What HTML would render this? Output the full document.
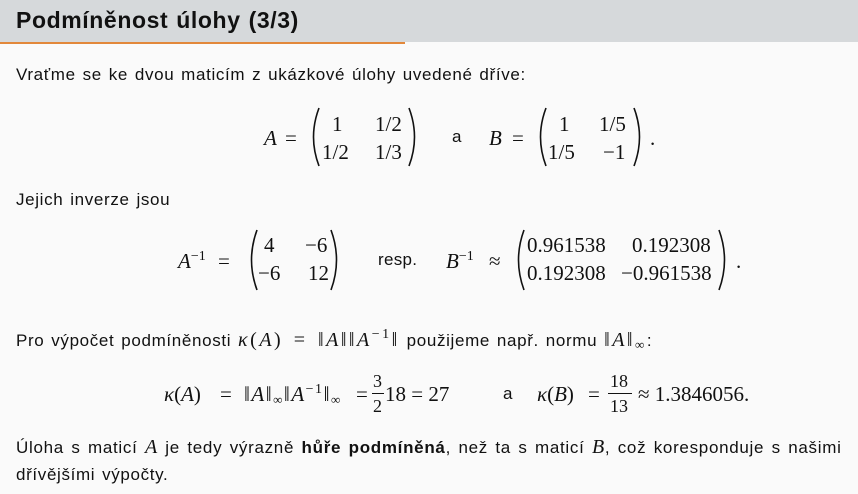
<!DOCTYPE html>
<html><head><meta charset="utf-8"><style>
body{margin:0;width:858px;height:494px;background:#fafafa;position:relative;overflow:hidden;font-family:"Liberation Sans",sans-serif;color:#111;}
.hd{position:absolute;left:0;top:0;width:858px;height:42px;background:#d6d9db;}
.ln{position:absolute;left:0;top:42px;width:405px;height:2px;background:#e2883a;}
.t{position:absolute;white-space:nowrap;font-size:17px;line-height:20px;letter-spacing:0.65px;word-spacing:1.5px;}
.m{position:absolute;white-space:nowrap;font-family:"Liberation Serif",serif;font-size:21px;line-height:20px;}
i{font-family:"Liberation Serif",serif;font-size:20px;}
.m i{font-size:21px;}
sup{font-size:14px;font-style:normal;line-height:0;position:relative;top:-8px;vertical-align:baseline;font-family:"Liberation Serif",serif;}
sub{font-size:13px;line-height:0;position:relative;top:3px;vertical-align:baseline;}
.p{position:absolute;}
.s{font-family:"Liberation Serif",serif;font-size:20px;letter-spacing:2.5px;word-spacing:3px;}
</style></head><body>
<div class="hd"></div><div class="ln"></div>
<div class="t" style="left:16px;top:6px;font-size:23px;line-height:28px;font-weight:bold;letter-spacing:0.6px;word-spacing:1px">Podmíněnost úlohy (3/3)</div>

<div class="t" style="left:16px;top:65px">Vraťme se ke dvou maticím z ukázkové úlohy uvedené dříve:</div>

<div class="m" style="left:264px;top:128px"><i>A</i></div>
<div class="m" style="left:285px;top:128px">=</div>
<svg class="p" style="left:306px;top:107px" width="16" height="60"><path d="M13 1 Q2 30 13 59" stroke="#111" stroke-width="1.6" fill="none"/></svg>
<div class="m" style="left:332px;top:114px">1</div>
<div class="m" style="left:375px;top:114px">1/2</div>
<div class="m" style="left:322px;top:142px">1/2</div>
<div class="m" style="left:375px;top:142px">1/3</div>
<svg class="p" style="left:406px;top:107px" width="16" height="60"><path d="M3 1 Q14 30 3 59" stroke="#111" stroke-width="1.6" fill="none"/></svg>
<div class="t" style="left:452px;top:127px">a</div>
<div class="m" style="left:489px;top:128px"><i>B</i></div>
<div class="m" style="left:512px;top:128px">=</div>
<svg class="p" style="left:533px;top:107px" width="16" height="60"><path d="M13 1 Q2 30 13 59" stroke="#111" stroke-width="1.6" fill="none"/></svg>
<div class="m" style="left:559px;top:114px">1</div>
<div class="m" style="left:599px;top:114px">1/5</div>
<div class="m" style="left:548px;top:142px">1/5</div>
<div class="m" style="left:603px;top:142px">−1</div>
<svg class="p" style="left:631px;top:107px" width="16" height="60"><path d="M3 1 Q14 30 3 59" stroke="#111" stroke-width="1.6" fill="none"/></svg>
<div class="m" style="left:650px;top:128px">.</div>

<div class="t" style="left:16px;top:190px">Jejich inverze jsou</div>

<div class="m" style="left:178px;top:251px"><i>A</i><sup>−1</sup></div>
<div class="m" style="left:218px;top:251px">=</div>
<svg class="p" style="left:244px;top:229px" width="16" height="62"><path d="M13 1 Q2 31 13 61" stroke="#111" stroke-width="1.6" fill="none"/></svg>
<div class="m" style="left:264px;top:235px">4</div>
<div class="m" style="left:305px;top:235px">−6</div>
<div class="m" style="left:258px;top:263px">−6</div>
<div class="m" style="left:308px;top:263px">12</div>
<svg class="p" style="left:328px;top:229px" width="16" height="62"><path d="M3 1 Q14 31 3 61" stroke="#111" stroke-width="1.6" fill="none"/></svg>
<div class="t" style="left:378px;top:250px;letter-spacing:0.3px">resp.</div>
<div class="m" style="left:446px;top:251px"><i>B</i><sup>−1</sup></div>
<div class="m" style="left:489px;top:251px">≈</div>
<svg class="p" style="left:511px;top:229px" width="16" height="62"><path d="M13 1 Q2 31 13 61" stroke="#111" stroke-width="1.6" fill="none"/></svg>
<div class="m" style="left:527px;top:235px">0.961538</div>
<div class="m" style="left:632px;top:235px">0.192308</div>
<div class="m" style="left:527px;top:263px">0.192308</div>
<div class="m" style="left:621px;top:263px">−0.961538</div>
<svg class="p" style="left:716px;top:229px" width="16" height="62"><path d="M3 1 Q14 31 3 61" stroke="#111" stroke-width="1.6" fill="none"/></svg>
<div class="m" style="left:736px;top:251px">.</div>

<div class="t" style="left:16px;top:330px">Pro výpočet podmíněnosti <span class="s"><i>κ</i>(<i>A</i>) = ‖<i>A</i>‖‖<i>A</i><sup>−1</sup>‖</span> použijeme např. normu <span class="s">‖<i>A</i>‖<sub>∞</sub></span>:</div>

<div class="m" style="left:164px;top:384px"><i>κ</i>(<i>A</i>)</div>
<div class="m" style="left:220px;top:384px">=</div>
<div class="m" style="left:244px;top:384px;letter-spacing:1.5px">‖<i>A</i>‖<sub>∞</sub>‖<i>A</i><sup>−1</sup>‖<sub>∞</sub></div>
<div class="m" style="left:356px;top:384px">=</div>
<div class="m" style="left:373px;top:371px;font-size:18px">3</div>
<div class="p" style="left:372px;top:393px;width:12px;height:1px;background:#111"></div>
<div class="m" style="left:373px;top:396px;font-size:18px">2</div>
<div class="m" style="left:385px;top:384px">18 = 27</div>
<div class="t" style="left:503px;top:384px">a</div>
<div class="m" style="left:537px;top:384px"><i>κ</i>(<i>B</i>)</div>
<div class="m" style="left:588px;top:384px">=</div>
<div class="m" style="left:610px;top:371px;font-size:18px">18</div>
<div class="p" style="left:608px;top:393px;width:24px;height:1px;background:#111"></div>
<div class="m" style="left:610px;top:396px;font-size:18px">13</div>
<div class="m" style="left:638px;top:384px">≈ 1.3846056.</div>

<div class="t" style="left:16px;top:437px;letter-spacing:0.7px;word-spacing:2px">Úloha s maticí <i>A</i> je tedy výrazně <b>hůře podmíněná</b>, než ta s maticí <i>B</i>, což koresponduje s našimi</div>
<div class="t" style="left:16px;top:465px">dřívějšími výpočty.</div>
</body></html>
